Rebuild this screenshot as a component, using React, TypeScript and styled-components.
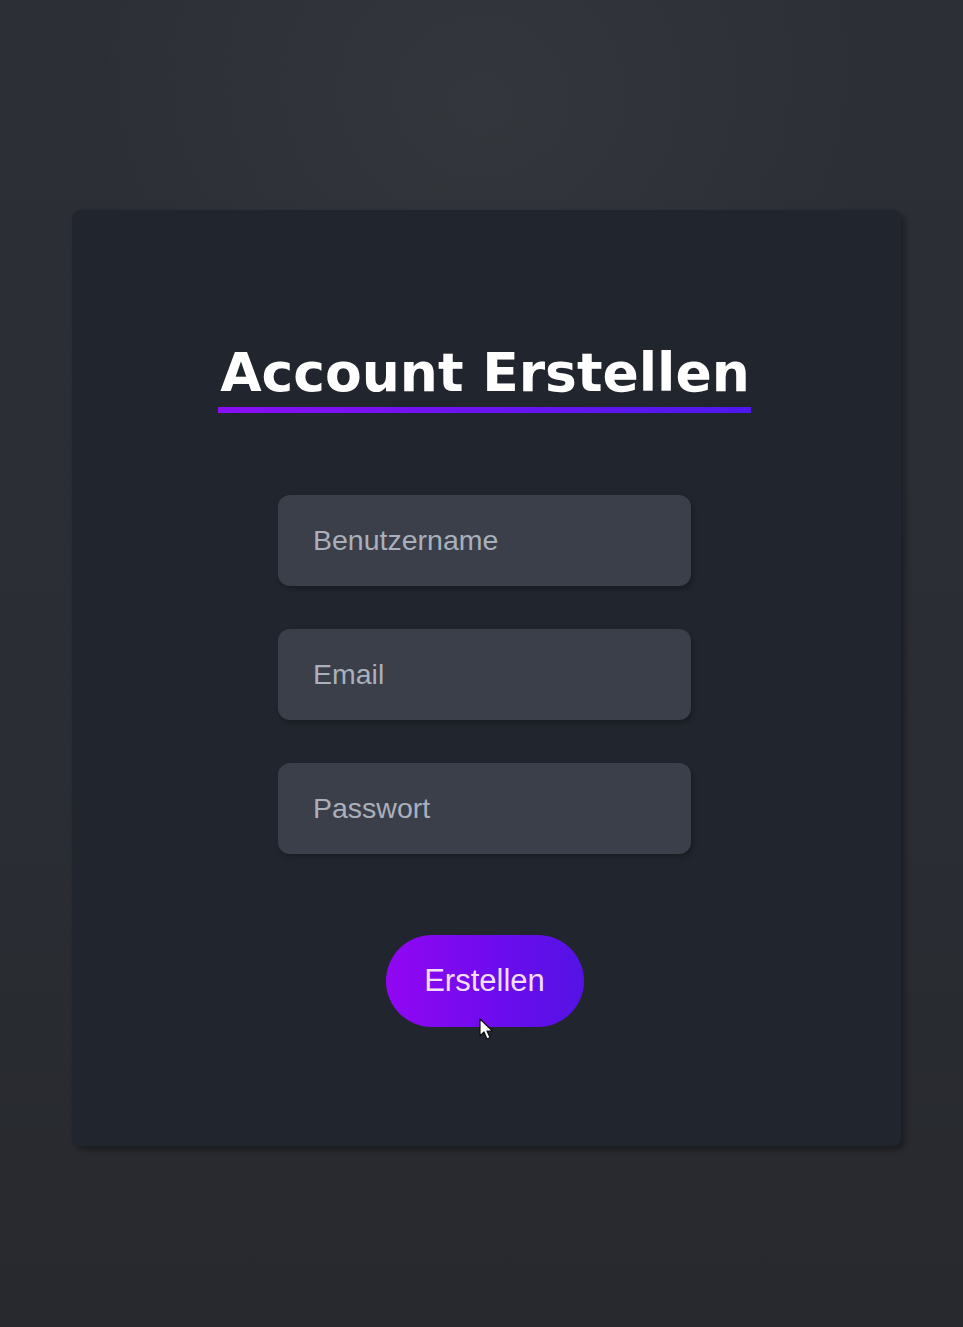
import styled, { createGlobalStyle } from "styled-components"

const GlobalStyle = createGlobalStyle`
    html, body {
        margin: 0;
        padding: 0;
        background: #2a2d33;
    }
    * {
        box-sizing: border-box;
    }
`

const App = () => {
    return (
        <Page>
            <GlobalStyle />
            <Card>
                <Title>Account Erstellen</Title>
                <Form>
                    <TextInput placeholder="Benutzername" />
                    <TextInput placeholder="Email" />
                    <TextInput type="password" placeholder="Passwort" />
                </Form>
                <ButtonWrap>
                    <SubmitButton>Erstellen</SubmitButton>
                    <Cursor viewBox="0 0 16 24" aria-hidden="true">
                        <path d="M1 1 L1 18 L5 14 L8 21 L11 19.6 L8 13 L13.5 13 Z" fill="#fff" stroke="#111" strokeWidth="1.2" strokeLinejoin="round" />
                    </Cursor>
                </ButtonWrap>
            </Card>
        </Page>
    )
}

export default App

const Page = styled.div`
    width: 963px;
    height: 1327px;
    padding: 210px 60px 0 72px;
    background:
        radial-gradient(ellipse 60% 40% at 50% 8%, rgba(255, 255, 255, 0.035), transparent 70%),
        linear-gradient(180deg, #2c2f35 0%, #2a2d33 60%, #27292e 100%);
`

const Card = styled.div`
    width: 829px;
    height: 936px;
    border-radius: 8px;
    background: #21252d;
    box-shadow: 4px 4px 6px rgba(0, 0, 0, 0.35);
    display: flex;
    flex-direction: column;
    align-items: center;
    padding: 135px 4px 0 0;
`

const Title = styled.h1`
    margin: 0;
    font-family: "DejaVu Sans", Verdana, sans-serif;
    font-weight: bold;
    font-size: 53.5px;
    line-height: 56px;
    color: #fff;
    padding: 0 1px 6px 2px;
    border-bottom: 6px solid transparent;
    border-image: linear-gradient(90deg, #8a0ff2, #4d18ee) 1;
`

const Form = styled.div`
    margin-top: 82px;
    display: flex;
    flex-direction: column;
    gap: 43px;
`

const TextInput = styled.input`
    width: 413px;
    height: 91px;
    border: none;
    outline: none;
    border-radius: 12px;
    background: #3a3f4a;
    box-shadow: 2px 3px 5px rgba(0, 0, 0, 0.25);
    padding: 0 35px;
    font-family: "Liberation Sans", Arial, sans-serif;
    font-size: 28.5px;
    color: #e6e8ee;

    &::placeholder {
        color: #aab0bb;
    }
`

const ButtonWrap = styled.div`
    position: relative;
    margin-top: 81px;
`

const SubmitButton = styled.button`
    width: 198px;
    height: 92px;
    border: none;
    border-radius: 46px;
    background: linear-gradient(90deg, #9207f2 0%, #6a0cee 60%, #5413e4 100%);
    color: #f3def8;
    font-family: "Liberation Sans", Arial, sans-serif;
    font-size: 31px;
    cursor: pointer;
`

const Cursor = styled.svg`
    position: absolute;
    left: 93px;
    top: 83px;
    width: 16px;
    height: 24px;
`
